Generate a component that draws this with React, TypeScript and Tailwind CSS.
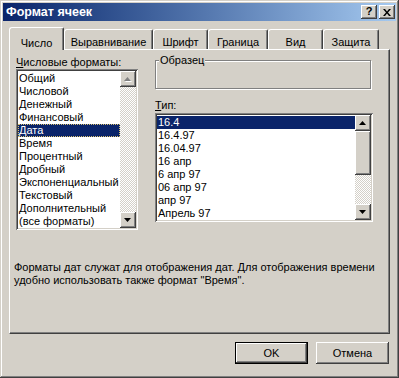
const raised =
  "shadow-[inset_-1px_-1px_#404040,inset_1px_1px_#ffffff,inset_-2px_-2px_#808080,inset_2px_2px_#d4d0c8]";
const sunken =
  "shadow-[inset_1px_1px_#808080,inset_-1px_-1px_#ffffff,inset_2px_2px_#404040,inset_-2px_-2px_#d4d0c8]";
const dither =
  "bg-[repeating-conic-gradient(#ffffff_0%_25%,#d4d0c8_0%_50%)] bg-size-[2px_2px]";

function Arrow({ up, disabled }: { up?: boolean; disabled?: boolean }) {
  const pts = up ? "3.5,0 7,4 0,4" : "0,0 7,0 3.5,4";
  return (
    <div className={`w-[16px] h-[16px] shrink-0 bg-[#d4d0c8] ${raised} flex items-center justify-center`}>
      <svg width="8" height="5" viewBox="0 0 8 5">
        {disabled && <polygon points={pts} fill="#ffffff" transform="translate(1,1)" />}
        <polygon points={pts} fill={disabled ? "#808080" : "#000000"} />
      </svg>
    </div>
  );
}

function ListBox({
  items,
  selected,
  focus,
  className,
  thumb,
  upDisabled,
}: {
  items: string[];
  selected: number;
  focus?: boolean;
  className: string;
  thumb?: boolean;
  upDisabled?: boolean;
}) {
  return (
    <div className={`bg-white p-[2px] flex ${sunken} ${className}`}>
      <div className="flex-1 pt-px overflow-hidden">
        {items.map((it, i) => (
          <div
            key={it}
            className={`h-[13px] leading-[13px] pl-px whitespace-nowrap ${
              i === selected ? "bg-[#0a246a] text-white" : "text-black"
            } ${i === selected && focus ? "outline-1 outline-dotted outline-[#d8c070] -outline-offset-1" : ""}`}
          >
            {it}
          </div>
        ))}
      </div>
      <div className="w-[16px] flex flex-col">
        <Arrow up disabled={upDisabled} />
        {thumb ? (
          <>
            <div className={`h-[44px] bg-[#d4d0c8] ${raised}`} />
            <div className={`flex-1 ${dither}`} />
          </>
        ) : (
          <div className={`flex-1 ${dither}`} />
        )}
        <Arrow />
      </div>
    </div>
  );
}

const formats = [
  "Общий",
  "Числовой",
  "Денежный",
  "Финансовый",
  "Дата",
  "Время",
  "Процентный",
  "Дробный",
  "Экспоненциальный",
  "Текстовый",
  "Дополнительный",
  "(все форматы)",
];

const types = ["16.4", "16.4.97", "16.04.97", "16 апр", "6 апр 97", "06 апр 97", "апр 97", "Апрель 97"];

const tabs = [
  { name: "Выравнивание", w: "w-[89px]" },
  { name: "Шрифт", w: "w-[55px]" },
  { name: "Граница", w: "w-[60px]" },
  { name: "Вид", w: "w-[55px]" },
  { name: "Защита", w: "w-[56px]" },
];

export default function App() {
  return (
    <div
      className={`w-[399px] h-[378px] bg-[#d4d0c8] p-[3px] flex flex-col text-[11px] text-black font-['Liberation_Sans',Arial,sans-serif] shadow-[inset_-1px_-1px_#404040,inset_1px_1px_#d4d0c8,inset_-2px_-2px_#808080,inset_2px_2px_#ffffff]`}
    >
      {/* title bar */}
      <div className="h-[18px] flex items-center pl-[3px] pr-[1px] bg-linear-to-r from-[#0a246a] to-[#a6caf0]">
        <span className="flex-1 text-white font-bold text-[12.5px]">Формат ячеек</span>
        <div className="flex gap-[2px]">
          <div className={`w-[16px] h-[14px] bg-[#d4d0c8] ${raised} flex items-center justify-center font-bold text-[11px] leading-none pb-px`}>
            ?
          </div>
          <div className={`w-[16px] h-[14px] bg-[#d4d0c8] ${raised} flex items-center justify-center`}>
            <svg width="8" height="7" viewBox="0 0 8 7">
              <path d="M0 0h2l2 2.5L6 0h2L5 3.5 8 7H6L4 4.5 2 7H0l3-3.5z" fill="#000" />
            </svg>
          </div>
        </div>
      </div>

      {/* tabs */}
      <div className="mt-[6px] ml-[6px] h-[23px] -mb-px flex items-end relative z-10">
        <div className="w-[55px] h-[23px] bg-[#d4d0c8] border-t border-l border-white rounded-tl-[3px] rounded-tr-[2px] border-r border-r-[#404040] shadow-[inset_-1px_0_#808080] flex items-start justify-center pt-[7px]">
          Число
        </div>
        {tabs.map((t) => (
          <div
            key={t.name}
            className={`${t.w} h-[20px] mb-px border-t border-l border-white rounded-tl-[3px] rounded-tr-[2px] border-r border-r-[#404040] shadow-[inset_-1px_0_#808080] flex items-start justify-center pt-[4px]`}
          >
            {t.name}
          </div>
        ))}
      </div>

      {/* panel */}
      <div className="ml-[6px] w-[381px] h-[285px] border-t border-l border-white border-r border-b border-r-[#404040] border-b-[#404040] shadow-[inset_-1px_-1px_#808080] flex flex-col">
        <div className="flex pt-[6px] pl-[6px]">
          <div className="w-[122px] flex flex-col">
            <div className="h-[13px] leading-[13px]">
              <span className="underline">Ч</span>исловые форматы:
            </div>
            <ListBox items={formats} selected={4} focus upDisabled className="h-[161px]" />
          </div>

          <div className="ml-[17px] w-[218px] flex flex-col">
            <div className="mt-[4px] w-[216px] h-[29px] border border-[#808080] shadow-[inset_1px_1px_#ffffff,1px_1px_#ffffff] relative">
              <span className="absolute -top-[7px] left-[3px] bg-[#d4d0c8] px-px leading-[13px]">Образец</span>
            </div>
            <div className="mt-[10px] h-[13px] leading-[13px]">
              <span className="underline">Т</span>ип:
            </div>
            <ListBox items={types} selected={0} thumb className="mt-px h-[109px]" />
          </div>
        </div>

        <div className="mt-[31px] ml-[4px] leading-[13px]">
          Форматы дат служат для отображения дат. Для отображения времени
          <br />
          удобно использовать также формат "Время".
        </div>
      </div>

      {/* buttons */}
      <div className="mt-[8px] flex justify-end gap-[8px] pr-[7px]">
        <div className="w-[73px] h-[22px] border border-black bg-[#d4d0c8] shadow-[inset_-1px_-1px_#404040,inset_1px_1px_#ffffff,inset_-2px_-2px_#808080] flex items-center justify-center">
          OK
        </div>
        <div className={`w-[73px] h-[22px] bg-[#d4d0c8] shadow-[inset_-1px_-1px_#404040,inset_1px_1px_#ffffff,inset_-2px_-2px_#808080] flex items-center justify-center`}>
          Отмена
        </div>
      </div>
    </div>
  );
}
